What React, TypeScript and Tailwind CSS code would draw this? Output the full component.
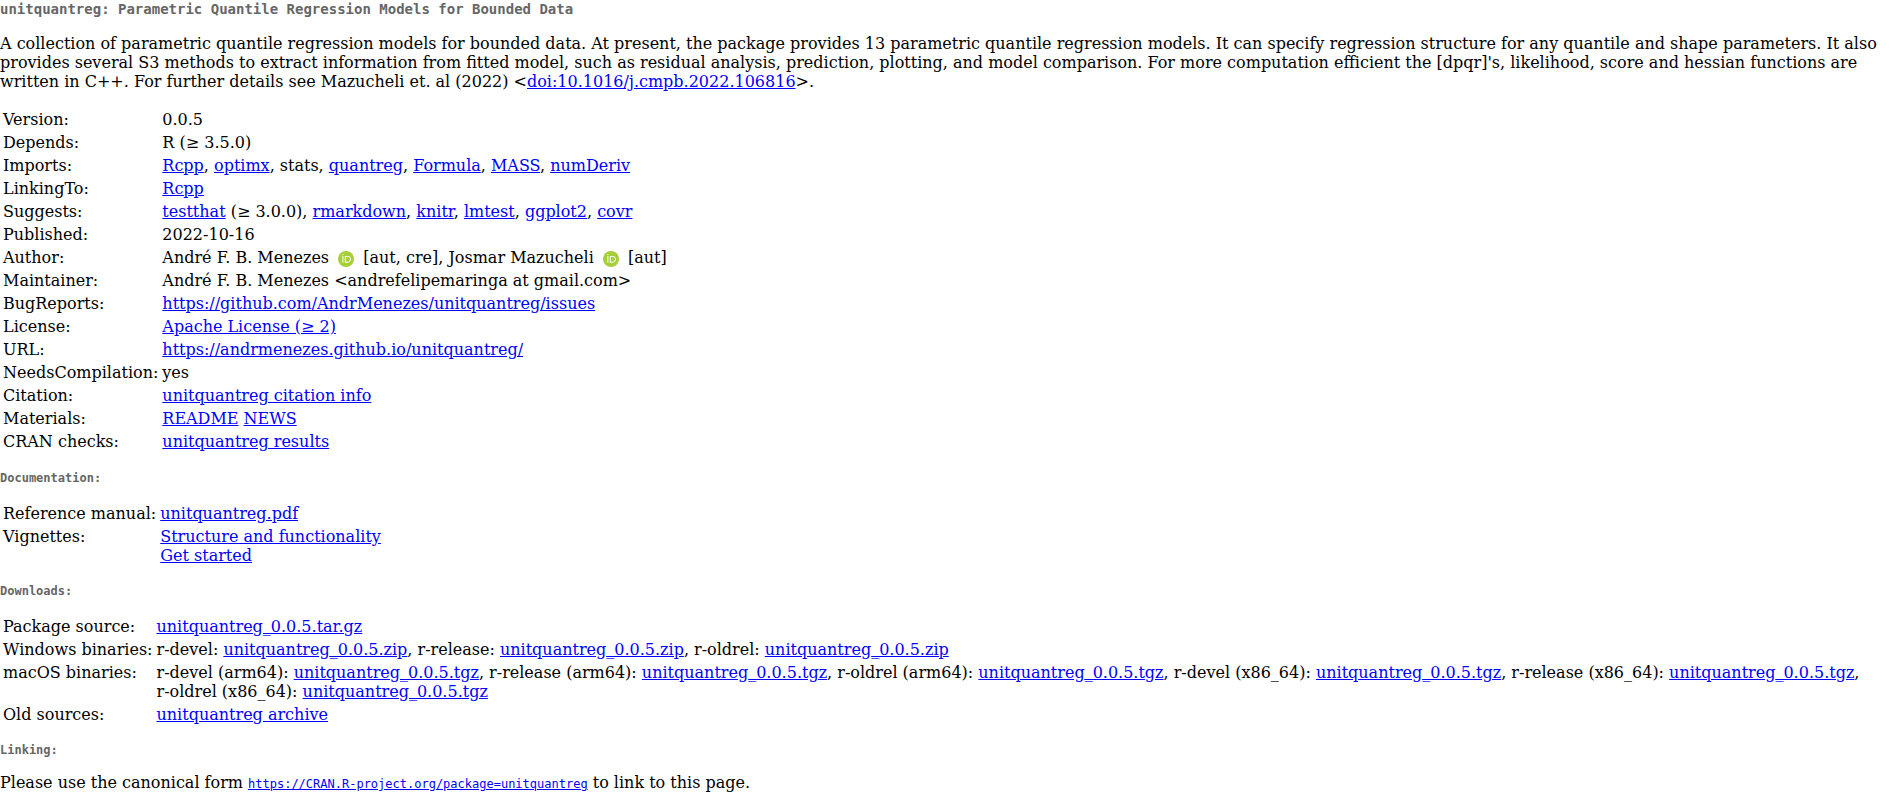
import type { ReactNode } from "react";

const slug = "unitquantreg";

function A({ href = "#", children }: { href?: string; children: ReactNode }) {
  return (
    <a href={href} className="text-[#0000ff] underline">
      {children}
    </a>
  );
}

function Orcid() {
  return (
    <a href="https://orcid.org/" aria-label="ORCID iD">
      <svg viewBox="0 0 256 256" className="mx-1 inline-block h-4 w-4 align-[-4px]">
        <circle cx="128" cy="128" r="128" fill="#a6ce39" />
        <g fill="#fff">
          <path d="M70.9 79.1h15.4v107.1H70.9z" />
          <path d="M108.9 79.1h41.6c39.6 0 57 28.3 57 53.6 0 27.5-21.5 53.6-56.8 53.6h-41.8V79.1zm15.4 93.3h24.5c34.9 0 42.9-26.5 42.9-39.7 0-21.5-13.7-39.7-43.7-39.7h-23.7v79.4z" />
          <circle cx="78.6" cy="56.8" r="10.1" />
        </g>
      </svg>
    </a>
  );
}

function Rows({ rows }: { rows: [string, ReactNode][] }) {
  return (
    <table className="border-separate border-spacing-0.5">
      <tbody>
        {rows.map(([label, value]) => (
          <tr key={label} className="align-top">
            <th scope="row" className="p-px text-left font-normal whitespace-nowrap">
              {label}
            </th>
            <td className="p-px">{value}</td>
          </tr>
        ))}
      </tbody>
    </table>
  );
}

function Heading({ children }: { children: ReactNode }) {
  return (
    <h4 className="my-4 font-['DejaVu_Sans_Mono',monospace] text-[12px] leading-[14px] font-bold text-[#666666]">
      {children}
    </h4>
  );
}

const tgz = <A>{slug}_0.0.5.tgz</A>;
const zip = <A>{slug}_0.0.5.zip</A>;

const details: [string, ReactNode][] = [
  ["Version:", "0.0.5"],
  ["Depends:", "R (≥ 3.5.0)"],
  [
    "Imports:",
    <>
      <A>Rcpp</A>, <A>optimx</A>, stats, <A>quantreg</A>, <A>Formula</A>, <A>MASS</A>, <A>numDeriv</A>
    </>,
  ],
  ["LinkingTo:", <A>Rcpp</A>],
  [
    "Suggests:",
    <>
      <A>testthat</A> (≥ 3.0.0), <A>rmarkdown</A>, <A>knitr</A>, <A>lmtest</A>, <A>ggplot2</A>, <A>covr</A>
    </>,
  ],
  ["Published:", "2022-10-16"],
  [
    "Author:",
    <>
      André F. B. Menezes <Orcid /> [aut, cre], Josmar Mazucheli <Orcid /> [aut]
    </>,
  ],
  ["Maintainer:", "André F. B. Menezes <andrefelipemaringa at gmail.com>"],
  [
    "BugReports:",
    <A href="https://github.com/AndrMenezes/unitquantreg/issues">
      https://github.com/AndrMenezes/unitquantreg/issues
    </A>,
  ],
  ["License:", <A>Apache License (≥ 2)</A>],
  [
    "URL:",
    <A href="https://andrmenezes.github.io/unitquantreg/">https://andrmenezes.github.io/unitquantreg/</A>,
  ],
  ["NeedsCompilation:", "yes"],
  ["Citation:", <A>unitquantreg citation info</A>],
  [
    "Materials:",
    <>
      <A>README</A> <A>NEWS</A>
    </>,
  ],
  ["CRAN checks:", <A>unitquantreg results</A>],
];

const documentation: [string, ReactNode][] = [
  ["Reference manual:", <A>unitquantreg.pdf</A>],
  [
    "Vignettes:",
    <>
      <A>Structure and functionality</A>
      <br />
      <A>Get started</A>
    </>,
  ],
];

const downloads: [string, ReactNode][] = [
  ["Package source:", <A>unitquantreg_0.0.5.tar.gz</A>],
  [
    "Windows binaries:",
    <>
      r-devel: {zip}, r-release: {zip}, r-oldrel: {zip}
    </>,
  ],
  [
    "macOS binaries:",
    <>
      r-devel (arm64): {tgz}, r-release (arm64): {tgz}, r-oldrel (arm64): {tgz}, r-devel (x86_64): {tgz},
      r-release (x86_64): {tgz}, <span className="whitespace-nowrap">r-oldrel (x86_64): {tgz}</span>
    </>,
  ],
  ["Old sources:", <A>unitquantreg archive</A>],
];

export default function App() {
  return (
    <main className="bg-white font-['DejaVu_Serif',serif] text-[16px] leading-[19px] text-black">
      <h2 className="mb-4 font-['DejaVu_Sans_Mono',monospace] text-[14px] leading-[18px] font-bold text-[#666666]">
        unitquantreg: Parametric Quantile Regression Models for Bounded Data
      </h2>
      <p className="my-4">
        A collection of parametric quantile regression models for bounded data. At present, the package provides
        13 parametric quantile regression models. It can specify regression structure for any quantile and shape
        parameters. It also provides several S3 methods to extract information from fitted model, such as residual
        analysis, prediction, plotting, and model comparison. For more computation efficient the [dpqr]'s,
        likelihood, score and hessian functions are written in C++. For further details see Mazucheli et. al
        (2022) &lt;<A href="https://doi.org/10.1016/j.cmpb.2022.106816">doi:10.1016/j.cmpb.2022.106816</A>&gt;.
      </p>
      <section className="pb-px">
        <Rows rows={details} />
      </section>
      <Heading>Documentation:</Heading>
      <Rows rows={documentation} />
      <Heading>Downloads:</Heading>
      <Rows rows={downloads} />
      <Heading>Linking:</Heading>
      <p>
        Please use the canonical form{" "}
        <a
          href="https://CRAN.R-project.org/package=unitquantreg"
          className="font-['DejaVu_Sans_Mono',monospace] text-[12px] text-[#0000ff] underline"
        >
          https://CRAN.R-project.org/package=unitquantreg
        </a>{" "}
        to link to this page.
      </p>
    </main>
  );
}
